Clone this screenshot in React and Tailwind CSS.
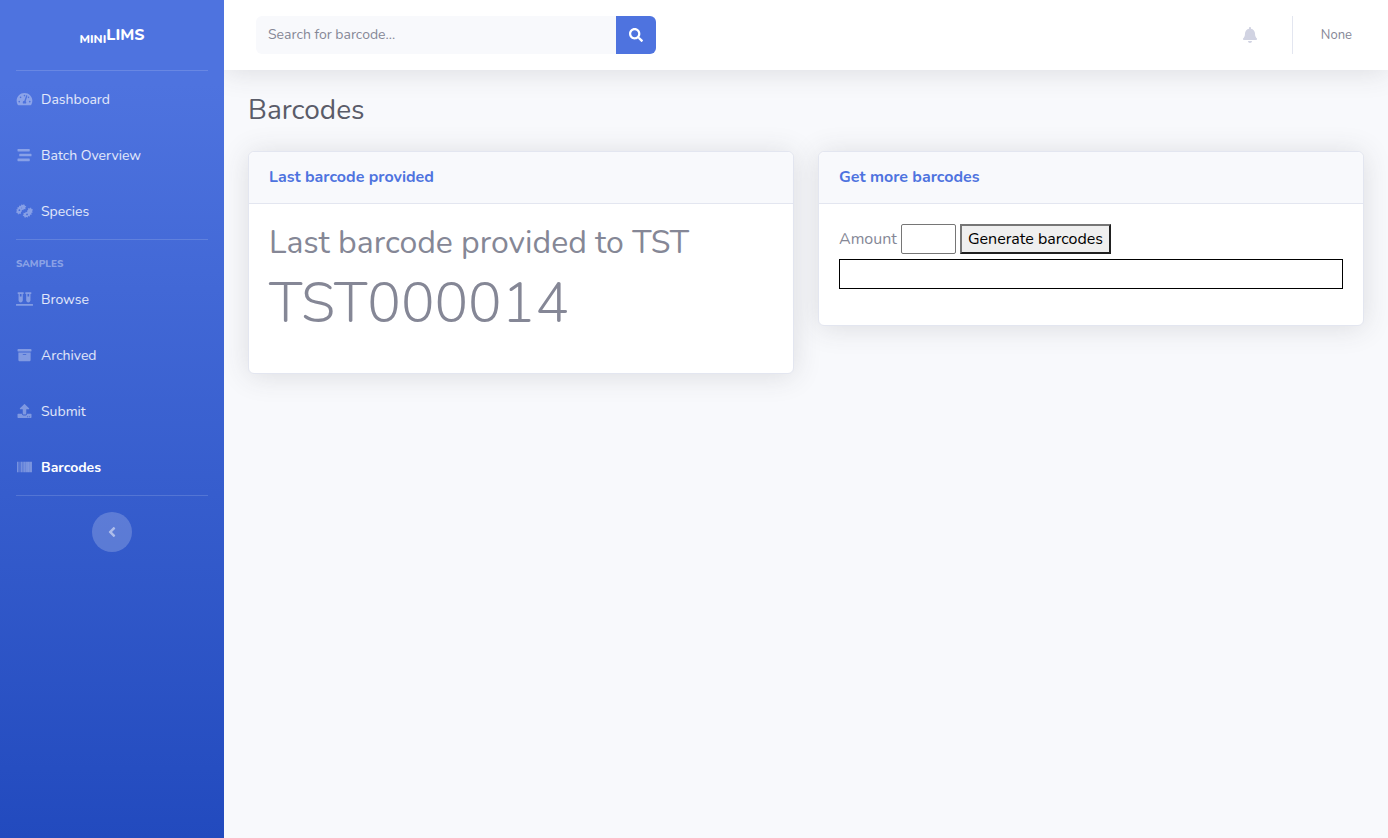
import {
  FaAngleLeft,
  FaArchive,
  FaBacteria,
  FaBarcode,
  FaBell,
  FaSearch,
  FaStream,
  FaTachometerAlt,
  FaUpload,
  FaVials,
} from "react-icons/fa";

const overviewLinks = [
  { label: "Dashboard", icon: FaTachometerAlt },
  { label: "Batch Overview", icon: FaStream },
  { label: "Species", icon: FaBacteria },
];

const sampleLinks = [
  { label: "Browse", icon: FaVials },
  { label: "Archived", icon: FaArchive },
  { label: "Submit", icon: FaUpload },
  { label: "Barcodes", icon: FaBarcode, active: true },
];

function NavItem({ label, icon: Icon, active }) {
  return (
    <li>
      <a
        href="#"
        aria-current={active ? "page" : undefined}
        className={
          active
            ? "flex h-14 items-center gap-2 px-4 text-[14px] font-bold text-white"
            : "flex h-14 items-center gap-2 px-4 text-[14px] text-white/85"
        }
      >
        <Icon
          className={
            active
              ? "h-[14px] w-[17px] shrink-0 text-white/65"
              : "h-[14px] w-[17px] shrink-0 text-white/35"
          }
        />
        <span className="pt-0.5">{label}</span>
      </a>
    </li>
  );
}

function Divider() {
  return <hr className="mx-4 border-t border-white/15" />;
}

function Sidebar() {
  return (
    <nav className="relative z-10 flex w-56 shrink-0 flex-col bg-linear-to-b from-[#4e73df] from-10% to-[#224abe]">
      <a
        href="#"
        className="flex h-[70px] items-center justify-center text-[16px] font-extrabold text-white"
      >
        <span>
          <sub className="text-[12px]">MINI</sub>LIMS
        </span>
      </a>
      <Divider />
      <ul>
        {overviewLinks.map((link) => (
          <NavItem key={link.label} {...link} />
        ))}
      </ul>
      <Divider />
      <h2 className="px-4 pt-[17px] text-[10px] leading-[14px] font-extrabold text-white/40">
        SAMPLES
      </h2>
      <ul>
        {sampleLinks.map((link) => (
          <NavItem key={link.label} {...link} />
        ))}
      </ul>
      <Divider />
      <button
        type="button"
        aria-label="Collapse sidebar"
        className="mt-4 flex size-10 items-center justify-center self-center rounded-full bg-white/20 text-white/50"
      >
        <FaAngleLeft className="size-4" />
      </button>
    </nav>
  );
}

function Topbar() {
  return (
    <header className="flex h-[70px] items-center justify-between bg-white pr-9 pl-8 text-[13px] text-[#858796] shadow-[0_2px_28px_0_rgba(58,59,69,0.15)]">
      <form className="flex h-[38px] w-full max-w-[400px]" role="search">
        <input
          type="text"
          aria-label="Search for barcode"
          placeholder="Search for barcode..."
          className="min-w-0 flex-1 rounded-l-md bg-[#f8f9fc] px-3 text-[14px] placeholder:text-[#858796]"
        />
        <button
          type="submit"
          aria-label="Search"
          className="flex w-10 items-center justify-center rounded-r-md bg-[#4e73df] text-white"
        >
          <FaSearch className="size-[14px]" />
        </button>
      </form>
      <div className="flex items-center">
        <button type="button" aria-label="Notifications" className="text-[#d1d3e2]">
          <FaBell className="size-4" />
        </button>
        <div className="mr-7 ml-[34px] h-[38px] border-l border-[#e3e6f0]" />
        <a href="#">None</a>
      </div>
    </header>
  );
}

function Card({ title, children }) {
  return (
    <section className="rounded-md border border-[#e3e6f0] bg-white shadow-[0_2px_28px_0_rgba(58,59,69,0.15)]">
      <h2 className="rounded-t-md border-b border-[#e3e6f0] bg-[#f8f9fc] px-5 py-4 text-[16px] leading-[19px] font-bold text-[#4e73df]">
        {title}
      </h2>
      <div className="p-5">{children}</div>
    </section>
  );
}

export default function App() {
  return (
    <div className="flex min-h-screen bg-[#f8f9fc] font-['Nunito',Lato,sans-serif] text-[16px] leading-6 text-[#858796]">
      <Sidebar />
      <div className="min-w-0 flex-1">
        <Topbar />
        <main className="px-6 pt-6">
          <h1 className="text-[28px] leading-[33px] text-[#5a5c69]">Barcodes</h1>
          <div className="mt-6 grid grid-cols-2 items-start gap-6">
            <Card title="Last barcode provided">
              <h3 className="text-[32px] leading-[38px]">Last barcode provided to TST</h3>
              <p className="mt-2 mb-4 text-[56px] leading-[67px] font-light">TST000014</p>
            </Card>
            <Card title="Get more barcodes">
              <form className="flex flex-wrap items-center gap-1">
                <label htmlFor="amount">Amount</label>
                <input
                  id="amount"
                  type="text"
                  className="h-[30px] w-[55px] rounded-xs border border-[#767676] bg-white px-1 text-black"
                />
                <button
                  type="button"
                  className="h-[30px] border-2 border-t-[#767676] border-r-[#212121] border-b-[#212121] border-l-[#767676] bg-[#efefef] px-[6px] text-black"
                >
                  Generate barcodes
                </button>
              </form>
              <output
                htmlFor="amount"
                className="mt-[5px] mb-4 block h-[30px] border border-black"
              />
            </Card>
          </div>
        </main>
      </div>
    </div>
  );
}
